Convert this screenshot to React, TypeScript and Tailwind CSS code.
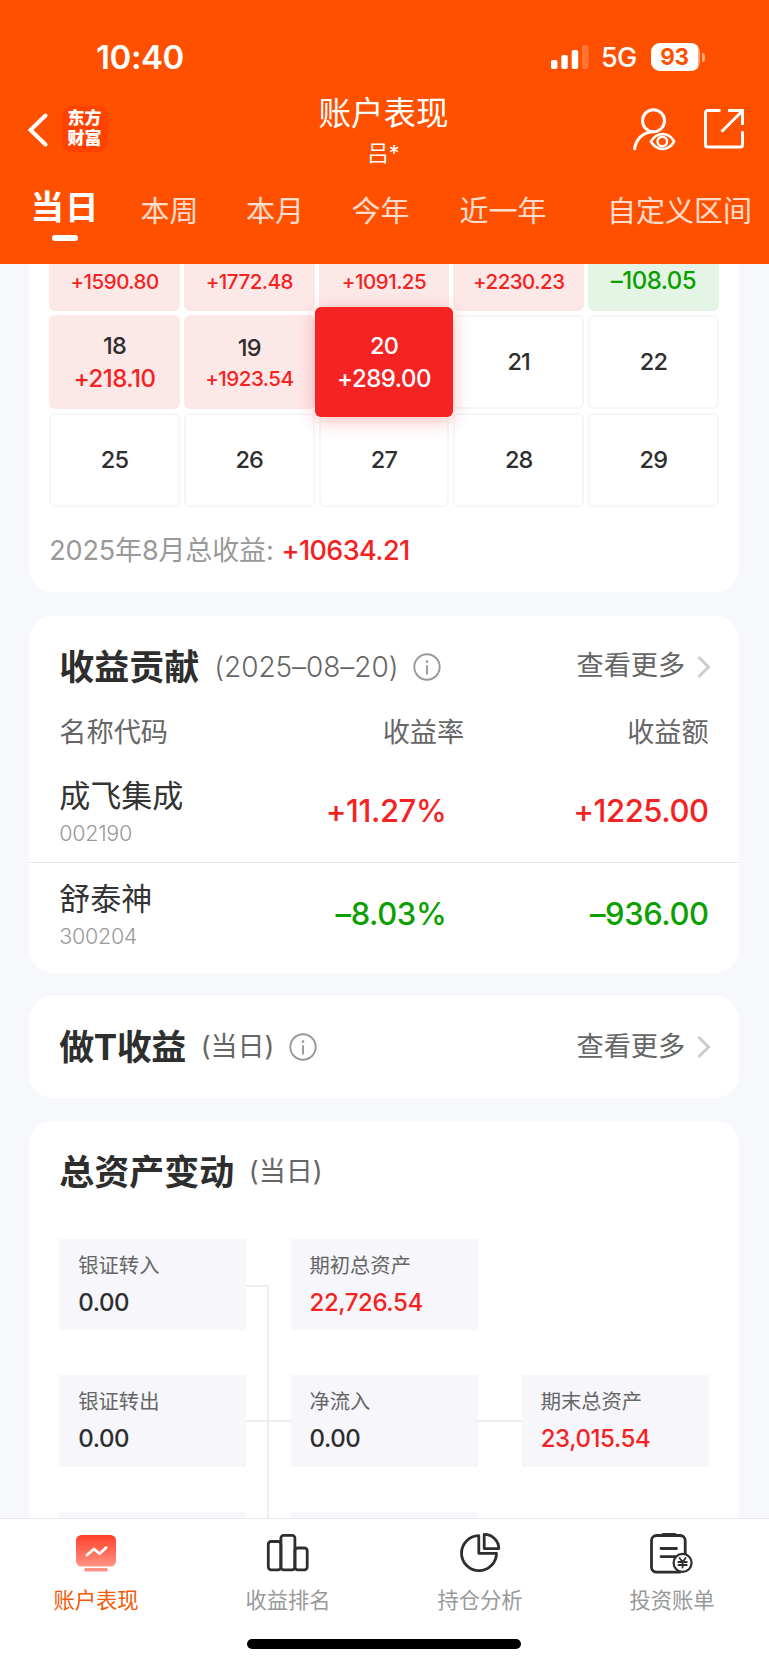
import React from 'react'

type Day = { day?: string; value?: string; kind: 'up' | 'down' | 'none' | 'active'; small?: boolean }

// first week is scrolled under the header, only its amounts stay visible
const weeks: Day[][] = [
  [
    { value: '+1590.80', kind: 'up', small: true },
    { value: '+1772.48', kind: 'up', small: true },
    { value: '+1091.25', kind: 'up', small: true },
    { value: '+2230.23', kind: 'up', small: true },
    { value: '–108.05', kind: 'down' },
  ],
  [
    { day: '18', value: '+218.10', kind: 'up' },
    { day: '19', value: '+1923.54', kind: 'up', small: true },
    { day: '20', value: '+289.00', kind: 'active' },
    { day: '21', kind: 'none' },
    { day: '22', kind: 'none' },
  ],
  [
    { day: '25', kind: 'none' },
    { day: '26', kind: 'none' },
    { day: '27', kind: 'none' },
    { day: '28', kind: 'none' },
    { day: '29', kind: 'none' },
  ],
]

const cellStyle = {
  up: 'bg-[#fde8e8]',
  down: 'bg-[#e5f5e5]',
  none: 'border-2 border-[#f6f6f6] bg-white',
  active: '',
}

const valueStyle = {
  up: 'text-[#f52222]',
  down: 'text-[#0aa000]',
  none: '',
  active: 'text-white',
}

const DayCell = ({ item }: { item: Day }) => {
  const text = (
    <>
      {item.day && (
        <p className={`text-[23.5px] font-medium tracking-[-0.8px] ${item.kind === 'active' ? 'text-white' : 'text-[#2e2e2e]'} ${item.small ? 'pt-[3px] leading-[30px]' : item.value ? 'pt-[2px] leading-[30px]' : 'leading-[30px]'}`}>
          {item.day}
        </p>
      )}
      {item.value && (
        <p className={`font-medium ${item.small ? 'pb-px text-[20.5px] leading-[31px] tracking-[-0.5px]' : 'pt-px text-[24px] leading-[34px] tracking-[-0.5px]'} ${valueStyle[item.kind]}`}>
          {item.value}
        </p>
      )}
    </>
  )
  if (item.kind === 'active') {
    return (
      <div className="relative h-[93.7px]">
        <div className="absolute -inset-x-[4px] -inset-y-[8px] z-10 flex flex-col items-center justify-center rounded-[6px] bg-[#f52323] shadow-[0_4px_18px_rgba(245,35,35,0.3)]">
          {text}
        </div>
      </div>
    )
  }
  return (
    <div className={`flex h-[93.7px] flex-col items-center rounded-[6px] ${item.day ? 'justify-center' : 'justify-end pb-[13.5px]'} ${cellStyle[item.kind]}`}>
      {text}
    </div>
  )
}

const StatusBar = () => (
  <div className="flex h-[92px] items-end justify-between pr-[64px] pl-[96px]">
    <p className="h-[56px] text-[33px] font-semibold leading-[43px] tracking-[-0.4px]">10:40</p>
    <div className="flex h-[56px] items-start">
      <svg className="mt-[9px]" width="38" height="24" viewBox="0 0 38 24" fill="#fff">
        <rect x="0" y="15" width="6.5" height="9" rx="2" />
        <rect x="10.3" y="10" width="6.5" height="14" rx="2" />
        <rect x="20.7" y="5" width="6.5" height="19" rx="2" />
        <rect x="31" y="0" width="6.5" height="24" rx="2" opacity="0.2" />
      </svg>
      <p className="ml-[12.5px] w-[38px] text-[27px] font-medium leading-[44px] tracking-[-0.6px]">5G</p>
      <div className="mt-[7px] ml-[12px] flex items-center">
        <div className="relative flex h-[28px] w-[49px] items-center overflow-hidden rounded-[9px] bg-white/50">
          <div className="flex h-[28px] w-[47px] items-center justify-center bg-white">
            <span className="text-[22.5px] font-bold leading-[28px] tracking-[-0.4px] text-[#ff5000]">93</span>
          </div>
        </div>
        <div className="ml-[2px] h-[9px] w-[3px] rounded-r-full bg-white/50" />
      </div>
    </div>
  </div>
)

const TitleBar = () => (
  <div className="grid h-[90px] grid-cols-[1fr_200px_1fr]">
    <div className="flex items-start pl-[26.5px]">
      <svg className="mt-[20px]" width="22" height="36" viewBox="0 0 22 36" fill="none" stroke="#fff" strokeWidth="4" strokeLinecap="round">
        <path d="M18.5 3.5 3.5 18l15 14.5" strokeLinejoin="miter" />
      </svg>
      <div className="mt-[14px] ml-[13px] flex h-[46px] w-[46px] flex-col items-center justify-center rounded-[9px] bg-[#ff4200] font-['Liberation_Sans','Noto_Sans_CJK_SC',sans-serif] text-[17px] font-black leading-[20px]">
        <span>东方</span>
        <span>财富</span>
      </div>
    </div>
    <div className="flex flex-col items-center pt-[2px] pr-[2px]">
      <p className="text-[32.5px] leading-[40px]">账户表现</p>
      <p className="text-[21.5px] leading-[38px]">吕*</p>
    </div>
    <div className="flex items-start justify-end pr-[24.5px]">
      <svg className="mt-[16px]" width="44" height="44" viewBox="0 0 44 44" fill="none" stroke="#fff" strokeWidth="3">
        <circle cx="21.5" cy="12.7" r="11" />
        <path d="M2.5 42C3.5 31 11 24 21.5 23.7" />
        <path d="M18.8 33.5c6.5-10 17.5-10 23.4 0-6 10-17 10-23.4 0Z" strokeWidth="2.6" strokeLinejoin="round" />
        <circle cx="30.3" cy="33.5" r="4.8" strokeWidth="2.4" />
      </svg>
      <svg className="mt-[16px] ml-[27px]" width="42" height="42" viewBox="0 0 42 42" fill="none" stroke="#fff" strokeWidth="3">
        <path d="M17.5 2.6H4.5a2 2 0 0 0-2 2V37a2 2 0 0 0 2 2h33a2 2 0 0 0 2-2V23.3" />
        <path d="M25 2.6h14.5V17M39 3.2 18.5 23.7" />
      </svg>
    </div>
  </div>
)

const Tabs = () => (
  <div className="flex h-[82px] text-[29px] leading-[40px] whitespace-nowrap text-white/80">
    <div className="ml-[30px] flex w-[70px] flex-col items-center pt-[5px] text-white">
      <p className="text-[33.5px] font-bold leading-[40px] tracking-[1px]">当日</p>
      <span className="mt-[8px] mr-[1px] h-[6px] w-[26px] rounded-full bg-white" />
    </div>
    <p className="ml-[40.5px] w-[105.5px] pt-[10px]">本周</p>
    <p className="w-[105.5px] pt-[10px]">本月</p>
    <p className="w-[108px] pt-[10px]">今年</p>
    <p className="w-[147.5px] pt-[10px]">近一年</p>
    <p className="pt-[10px]">自定义区间</p>
  </div>
)

const InfoIcon = () => (
  <svg width="28" height="28" viewBox="0 0 28 28" fill="none" stroke="#999" strokeWidth="1.9">
    <circle cx="14" cy="14" r="12.7" />
    <path d="M14 12.2v9.3" />
    <circle cx="14" cy="8.6" r="1.3" fill="#999" stroke="none" />
  </svg>
)

const More = () => (
  <div className="-mr-[3px] ml-auto flex items-center text-[27.2px] text-[#666]">
    <p>查看更多</p>
    <svg className="ml-[10.5px]" width="16" height="24" viewBox="0 0 16 24" fill="none" stroke="#ccc" strokeWidth="3">
      <path d="m2.5 2 10 10-10 10" />
    </svg>
  </div>
)

const StockRow = ({ name, code, rate, amount, color }: { name: string; code: string; rate: string; amount: string; color: string }) => (
  <div className="flex h-[102px] items-center px-[30px]">
    <div className="w-[200px] pt-[7px]">
      <p className="text-[31px] leading-[38px] text-[#333]">{name}</p>
      <p className="text-[21.5px] font-light leading-[37px] tracking-[-0.3px] text-[#999]">{code}</p>
    </div>
    <p className={`w-[187px] text-right text-[31px] font-medium tracking-[-0.4px] ${color}`}>{rate}</p>
    <p className={`ml-auto text-right text-[31px] font-medium tracking-[-0.4px] ${color}`}>{amount}</p>
  </div>
)

const AssetBox = ({ label, value, red }: { label: string; value: string; red?: boolean }) => (
  <div className="h-[91.7px] bg-[#f6f6fb] pt-[9px] pl-[19px]">
    <p className="text-[20.3px] leading-[36px] text-[#666]">{label}</p>
    <p className={`text-[24px] font-medium leading-[37px] tracking-[-0.4px] ${red ? 'text-[#f52222]' : 'text-[#2e2e2e]'}`}>{value}</p>
  </div>
)

const NavItem = ({ label, active, children }: { label: string; active?: boolean; children: React.ReactNode }) => (
  <div className="flex flex-1 flex-col items-center pt-[12px]">
    {children}
    <p className={`mt-[5px] text-[21.3px] leading-[36px] ${active ? 'text-[#f25a0a]' : 'text-[#999]'}`}>{label}</p>
  </div>
)

const App = () => {
  return (
    <div className="flex h-[1665px] w-[769px] flex-col overflow-hidden bg-[#f6f8fb] font-['Inter','Noto_Sans_CJK_SC',sans-serif]">
      <header className="h-[264px] shrink-0 bg-[#ff5000] text-white">
        <StatusBar />
        <TitleBar />
        <Tabs />
      </header>

      <main className="flex min-h-0 flex-1 flex-col gap-[23.5px] overflow-hidden pr-[30.3px] pl-[29.3px]">
        <section className="-mt-[46.5px] h-[374.8px] shrink-0 rounded-[24px] bg-white px-[20px]">
          <div className="grid grid-cols-5 gap-[4.2px]">
            {weeks.flat().map((d, i) => (
              <DayCell key={i} item={d} />
            ))}
          </div>
          <div className="mt-[24.5px] flex h-[40px] items-center text-[27px]">
            <p className="tracking-[-0.15px] text-[#999]">2025年8月总收益:</p>
            <p className="ml-[8px] font-medium tracking-[-0.6px] text-[#f52222]">+10634.21</p>
          </div>
        </section>

        <section className="h-[357px] shrink-0 rounded-[24px] bg-white">
          <div className="flex h-[102px] items-center px-[30px]">
            <h2 className="text-[35px] font-bold text-[#2e2e2e]">收益贡献</h2>
            <p className="mr-[15px] ml-[15px] text-[28px] font-light tracking-[-0.05px] text-[#666]">(2025–08–20)</p>
            <InfoIcon />
            <More />
          </div>
          <div className="-mt-[4px] flex h-[40px] items-center px-[30px] text-[27.2px] text-[#666]">
            <p>名称代码</p>
            <p className="ml-auto w-[100px] text-right">收益率</p>
            <p className="w-[244.5px] text-right">收益额</p>
          </div>
          <div className="pt-[6px]">
            <StockRow name="成飞集成" code="002190" rate="+11.27%" amount="+1225.00" color="text-[#f52222]" />
            <div className="h-px bg-[#e8e8e8]" />
            <StockRow name="舒泰神" code="300204" rate="–8.03%" amount="–936.00" color="text-[#0aa000]" />
          </div>
        </section>

        <section className="flex h-[101.5px] shrink-0 items-center rounded-[24px] bg-white px-[30px]">
          <h2 className="text-[35px] font-bold tracking-[-0.5px] text-[#2e2e2e]">做T收益</h2>
          <p className="mr-[15px] ml-[15px] text-[27px] text-[#666]">(当日)</p>
          <InfoIcon />
          <More />
        </section>

        <section className="h-[480px] shrink-0 rounded-[24px] bg-white px-[30px]">
          <div className="flex h-[102px] items-center">
            <h2 className="text-[35px] font-bold text-[#2e2e2e]">总资产变动</h2>
            <p className="ml-[14.5px] text-[27px] text-[#666]">(当日)</p>
          </div>
          <div className="relative mt-[15.5px] grid grid-cols-[187px_187px_187px] justify-between gap-y-[45px]">
            {/* connectors between the boxes */}
            <div className="absolute top-[46px] left-[187px] h-[300px] w-[22.5px] border-t-2 border-r-2 border-[#eee]" />
            <div className="absolute top-[181.5px] left-[187px] h-[2px] w-[45px] bg-[#eee]" />
            <div className="absolute top-[181.5px] left-[418px] h-[2px] w-[45px] bg-[#eee]" />
            <AssetBox label="银证转入" value="0.00" />
            <AssetBox label="期初总资产" value="22,726.54" red />
            <div />
            <AssetBox label="银证转出" value="0.00" />
            <AssetBox label="净流入" value="0.00" />
            <AssetBox label="期末总资产" value="23,015.54" red />
            <AssetBox label="" value="" />
            <AssetBox label="" value="" />
          </div>
        </section>
      </main>

      <nav className="flex h-[147.5px] shrink-0 flex-col border-t border-[#e9e9e9] bg-white">
        <div className="flex pr-[1px]">
          <NavItem label="账户表现" active>
            <svg width="44" height="46" viewBox="0 0 44 46" fill="none">
              <defs>
                <linearGradient id="screen" x1="0" y1="0" x2="0" y2="1">
                  <stop offset="0" stopColor="#ff3f26" />
                  <stop offset="1" stopColor="#ff9486" />
                </linearGradient>
              </defs>
              <rect x="2" y="4" width="40" height="31.5" rx="5.5" fill="url(#screen)" />
              <path d="m13 24 7-6 5.5 4.7 6.5-6" stroke="#fff" strokeWidth="2.8" strokeLinecap="round" strokeLinejoin="round" />
              <rect x="10" y="37" width="24" height="3.4" rx="1.7" fill="#ff9486" />
            </svg>
          </NavItem>
          <NavItem label="收益排名">
            <svg width="44" height="46" viewBox="0 0 44 46" fill="none" stroke="#2e2e2e" strokeWidth="2.8">
              <rect x="2.3" y="10.5" width="12.6" height="28.4" rx="2.8" />
              <rect x="14.9" y="4.3" width="14" height="34.6" rx="2.8" />
              <rect x="28.9" y="17" width="12.3" height="21.9" rx="2.8" />
            </svg>
          </NavItem>
          <NavItem label="持仓分析">
            <svg width="44" height="46" viewBox="0 0 44 46" fill="none" stroke="#2e2e2e" strokeWidth="2.8" strokeLinejoin="round">
              <path d="M20.8 4.7a17.5 17.5 0 1 0 17.7 17.6H20.8Z" />
              <path d="M26.2 3.4v14.2h14.6A14.4 14.4 0 0 0 26.2 3.4Z" />
            </svg>
          </NavItem>
          <NavItem label="投资账单">
            <svg width="44" height="46" viewBox="0 0 44 46" fill="none" stroke="#2e2e2e" strokeWidth="2.8" strokeLinecap="round">
              <path d="M35.2 23V9.5a5 5 0 0 0-5-5H6.5a5 5 0 0 0-5 5v26.7a5 5 0 0 0 5 5H30" />
              <path d="M13 3.6h12" strokeWidth="3.4" />
              <path d="M11 17.5h15.5M11 25.6h14" />
              <circle cx="32.6" cy="31.8" r="9" fill="#fff" strokeWidth="2.2" />
              <path d="m29.6 27 3 4 3-4M32.6 31v5.6M28.4 31h8.4M28.4 34h8.4" strokeWidth="1.8" />
            </svg>
          </NavItem>
        </div>
        <div className="mt-[21px] ml-[247px] h-[10px] w-[274px] rounded-full bg-black" />
      </nav>
    </div>
  )
}

export default App
